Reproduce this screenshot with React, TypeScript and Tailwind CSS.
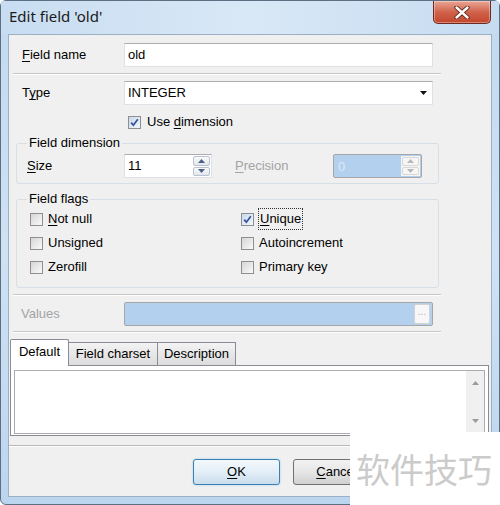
import type { ReactNode } from "react";

// ─── small pieces ──────────────────────────────────────────────────────────────
function Ul({ children }: { children: ReactNode }) {
  return <span className="underline decoration-1 underline-offset-[2px]">{children}</span>;
}

function CheckBox({ checked }: { checked?: boolean }) {
  return (
    <span
      className={`flex h-[13px] w-[13px] shrink-0 items-center justify-center border border-[#8e8f8f] ${
        checked ? "bg-gradient-to-br from-[#c9d8ec] to-[#f3f7fc]" : "bg-gradient-to-br from-[#d6d6d6] to-[#fafafa]"
      }`}
    >
      {checked && (
        <svg width="9" height="9" viewBox="0 0 9 9">
          <path d="M1.2 4.6 L3.4 7.2 L7.8 1.2" fill="none" stroke="#34509a" strokeWidth="1.7" />
        </svg>
      )}
    </span>
  );
}

function Arrow({ up, color }: { up?: boolean; color: string }) {
  return (
    <svg width="7" height="4" viewBox="0 0 7 4">
      <path d={up ? "M0 4 L3.5 0 L7 4 Z" : "M0 0 L7 0 L3.5 4 Z"} fill={color} />
    </svg>
  );
}

function Spin({ value, disabled, w }: { value: string; disabled?: boolean; w: string }) {
  return (
    <div
      className={`flex h-[24px] ${w} border ${
        disabled ? "rounded-[2px] border-[#a6a6a6] bg-[#b3d0ee] p-px" : "border-[#dde1e6] border-t-[#abadb3] bg-white"
      }`}
    >
      <span className={`flex-1 pl-[3px] leading-[22px] ${disabled ? "text-[#dfe9f5]" : "text-black"}`}>{value}</span>
      <div className={`flex w-[19px] flex-col gap-px p-px ${disabled ? "bg-[#f4f4f4]" : ""}`}>
        <span
          className={`flex flex-1 items-center justify-center rounded-[2px] border ${
            disabled ? "border-[#d8d8d8] bg-[#f6f6f6]" : "border-[#b9c3cf] bg-gradient-to-b from-[#fafafa] to-[#e3e7ec]"
          }`}
        >
          <Arrow up color={disabled ? "#b8b8b8" : "#4a6189"} />
        </span>
        <span
          className={`flex flex-1 items-center justify-center rounded-[2px] border ${
            disabled ? "border-[#d8d8d8] bg-[#f6f6f6]" : "border-[#b9c3cf] bg-gradient-to-b from-[#fafafa] to-[#e3e7ec]"
          }`}
        >
          <Arrow color={disabled ? "#b8b8b8" : "#4a6189"} />
        </span>
      </div>
    </div>
  );
}

function Sep() {
  return <div className="ml-[4px] w-[428px] border-t border-b border-t-[#c6c6c6] border-b-white" />;
}

function Flag({ label, checked, focused }: { label: ReactNode; checked?: boolean; focused?: boolean }) {
  return (
    <div className="flex h-[24px] items-center gap-[5px]">
      <CheckBox checked={checked} />
      <span className={focused ? "px-px outline outline-1 outline-dotted outline-[#333]" : ""}>{label}</span>
    </div>
  );
}

// ─── App ───────────────────────────────────────────────────────────────────────
export default function App() {
  return (
    <div className="relative h-[505px] w-[500px] overflow-hidden bg-white font-['Liberation_Sans',Arial,sans-serif] text-[13px] text-black">
      <div className="flex h-[505px] w-[500px] flex-col rounded-[6px] border border-[#5d6f82] bg-gradient-to-b from-[#c2d9f0] via-[#cfe2f4] to-[#bcd5ee]">
        {/* title bar */}
        <div className="flex h-[33px] shrink-0 items-start justify-between bg-gradient-to-r from-[#c8ddf2] via-[#d9e8f6] to-[#c6dcf1]">
          <span className="pl-[8px] pt-[5px] font-['Noto_Sans',sans-serif] text-[15px] leading-[20px] text-[#1a1a1a]">
            Edit field 'old'
          </span>
          <div className="mr-[8px] flex h-[23px] w-[58px] items-center justify-center rounded-b-[5px] border border-t-0 border-[#6e2a1f] bg-gradient-to-b from-[#e9a696] via-[#d1624b] to-[#c2452c] shadow-[inset_0_0_0_1px_rgba(255,255,255,0.35)]">
            <svg width="16" height="13" viewBox="0 0 16 13">
              <path d="M2.5 1.5 L13.5 11.5 M13.5 1.5 L2.5 11.5" stroke="#5a2016" strokeWidth="4.2" strokeLinecap="round" />
              <path d="M2.5 1.5 L13.5 11.5 M13.5 1.5 L2.5 11.5" stroke="#ffffff" strokeWidth="2.4" strokeLinecap="round" />
            </svg>
          </div>
        </div>

        {/* client area */}
        <div className="mx-[7px] flex flex-1 flex-col border border-[#9cb0c5] bg-[#f0f0f0] pt-[8px]">
          {/* field name */}
          <div className="flex h-[24px] items-center">
            <span className="w-[115px] pl-[13px]">
              <Ul>F</Ul>ield name
            </span>
            <div className="h-[24px] w-[309px] border border-[#dde1e6] border-t-[#abadb3] bg-white pl-[3px] leading-[22px]">old</div>
          </div>

          <div className="mt-[6px]">
            <Sep />
          </div>

          {/* type */}
          <div className="mt-[6px] flex h-[24px] items-center">
            <span className="w-[115px] pl-[13px]">
              T<Ul>y</Ul>pe
            </span>
            <div className="flex h-[24px] w-[309px] items-center justify-between border border-[#dde1e6] border-t-[#abadb3] bg-white pl-[3px] pr-[5px]">
              <span>INTEGER</span>
              <Arrow color="#111" />
            </div>
          </div>

          {/* use dimension */}
          <div className="mt-[9px] flex h-[16px] items-center gap-[6px] pl-[119px]">
            <CheckBox checked />
            <span>
              Use <Ul>d</Ul>imension
            </span>
          </div>

          {/* field dimension */}
          <fieldset className="ml-[7px] mt-[5px] w-[423px] rounded-[3px] border border-[#d5dfe5] pb-[5px] pl-[10px]">
            <legend className="px-[2px] leading-[16px]">Field dimension</legend>
            <div className="mt-[3px] flex h-[24px] items-center">
              <span className="w-[97px]">
                <Ul>S</Ul>ize
              </span>
              <Spin value="11" w="w-[88px]" />
              <span className="ml-[23px] w-[98px] text-[#a3a3a3]">
                <Ul>P</Ul>recision
              </span>
              <Spin value="0" disabled w="w-[89px]" />
            </div>
          </fieldset>

          {/* field flags */}
          <fieldset className="ml-[7px] mt-[7px] w-[423px] rounded-[3px] border border-[#d5dfe5] pb-[8px] pl-[10px]">
            <legend className="px-[2px] leading-[16px]">Field flags</legend>
            <div className="grid grid-cols-[211px_1fr] pl-[3px]">
              <Flag label={<><Ul>N</Ul>ot null</>} />
              <Flag label={<><Ul>U</Ul>nique</>} checked focused />
              <Flag label="Unsigned" />
              <Flag label="Autoincrement" />
              <Flag label="Zerofill" />
              <Flag label="Primary key" />
            </div>
          </fieldset>

          <div className="mt-[6px]">
            <Sep />
          </div>

          {/* values */}
          <div className="mt-[6px] flex h-[24px] items-center">
            <span className="w-[115px] pl-[12px] text-[#a3a3a3]">Values</span>
            <div className="flex h-[24px] w-[309px] items-center justify-end rounded-[2px] border border-[#a6a6a6] bg-[#b3d0ee] pr-[2px]">
              <span className="flex h-[20px] w-[16px] items-center justify-center rounded-[2px] border border-[#d3d3d3] bg-[#f7f7f7] pb-[4px] text-[10px] leading-none text-[#b0b0b0]">
                ...
              </span>
            </div>
          </div>

          <div className="mt-[5px]">
            <Sep />
          </div>

          {/* tabs */}
          <div className="relative z-10 ml-px mt-[5px] flex h-[27px] items-end">
            <div className="-mb-px flex h-[27px] w-[59px] items-center justify-center rounded-t-[2px] border border-b-0 border-[#898c95] bg-white pb-[2px]">
              Default
            </div>
            <div className="flex h-[23px] w-[89px] items-center justify-center border border-b-0 border-l-0 border-[#898c95] bg-gradient-to-b from-[#f3f3f3] to-[#dcdcdc]">
              Field charset
            </div>
            <div className="flex h-[23px] w-[78px] items-center justify-center border border-b-0 border-l-0 border-[#898c95] bg-gradient-to-b from-[#f3f3f3] to-[#dcdcdc]">
              Description
            </div>
          </div>
          <div className="ml-px w-[479px] border border-[#898c95] bg-white px-[3px] pb-px pt-[4px]">
            <div className="flex h-[64px] border border-[#abadb3] bg-white">
              <div className="flex-1" />
              <div className="flex w-[18px] flex-col items-center justify-between bg-[#f0f0f0] py-[10px]">
                <Arrow up color="#9a9a9a" />
                <Arrow color="#9a9a9a" />
              </div>
            </div>
          </div>

          {/* bottom */}
          <div className="mt-[9px] border-t border-b border-t-[#b9b9b9] border-b-white" />
          <div className="mt-[12px] flex gap-[13px] pl-[184px]">
            <div className="flex h-[26px] w-[87px] items-center justify-center rounded-[3px] border border-[#3c7fb1] bg-gradient-to-b from-[#f2f9fd] via-[#e3eef7] to-[#c9dded] shadow-[0_0_2px_#8fc4ea]">
              <Ul>O</Ul>K
            </div>
            <div className="flex h-[26px] w-[87px] items-center justify-center rounded-[3px] border border-[#707070] bg-gradient-to-b from-[#f2f2f2] via-[#e6e6e6] to-[#d0d0d0]">
              <span>
                <Ul>C</Ul>ancel
              </span>
            </div>
          </div>
        </div>

        {/* bottom frame */}
        <div className="h-[7px] shrink-0" />
      </div>

      {/* watermark overlay */}
      <div className="absolute left-[350px] top-[432px] flex h-[73px] w-[150px] items-center bg-white pl-[6px]">
        <span className="font-['Noto_Sans_CJK_SC',sans-serif] text-[34px] leading-none text-[#cbcbcb]">软件技巧</span>
      </div>
    </div>
  );
}
